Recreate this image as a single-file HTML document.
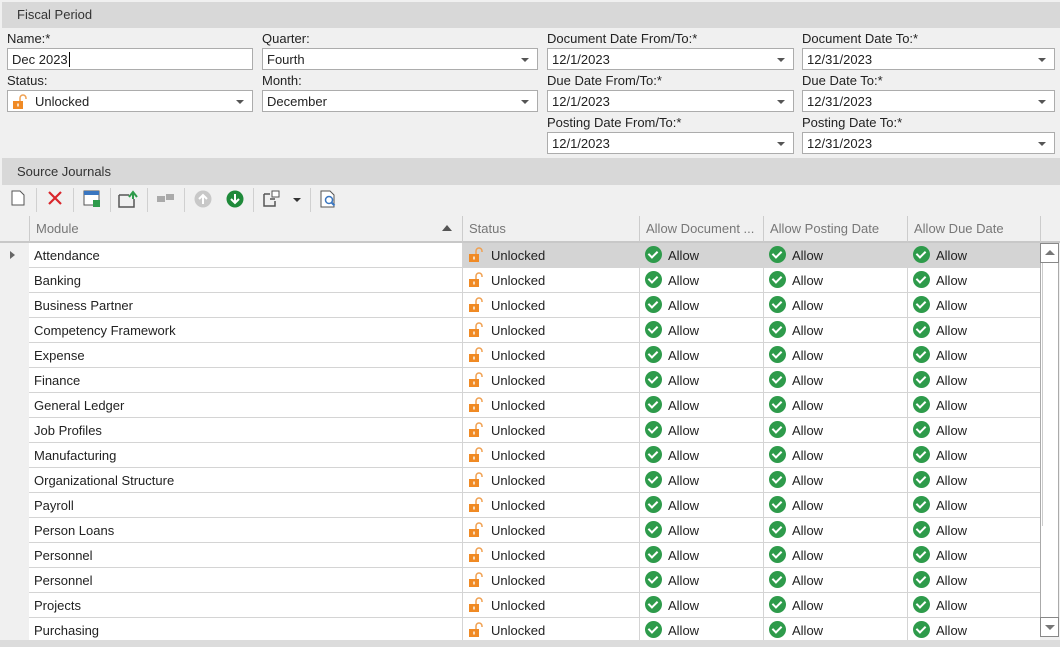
<!DOCTYPE html><html><head><style>
*{box-sizing:border-box;margin:0;padding:0}
body{width:1060px;height:647px;overflow:hidden;background:#f0f0f0;font-family:"Liberation Sans",sans-serif;font-size:13px;color:#222;position:relative}
.band{position:absolute;left:2px;right:0;background:#d8d8d8;color:#333;padding-left:15px;line-height:25px}
.lbl{position:absolute;font-size:13px;color:#222}
.inp{position:absolute;height:22px;background:#fff;border:1px solid #acacac;padding-left:4px;line-height:21px}
.dd::after{content:"";position:absolute;right:8px;top:9px;border:4px solid transparent;border-top:4px solid #555;border-bottom:0}
.hdr{position:absolute;top:216px;height:27px;border-bottom:2px solid #c8c8c8;color:#777;line-height:25px;padding-left:6px;border-left:1px solid #ccc;background:#f0f0f0}
.row{position:absolute;left:29px;width:1011px;height:25px;background:#fff;border-bottom:1px solid #d4d4d4}
.c{position:absolute;top:0;height:24px;line-height:25px;border-left:1px solid #d4d4d4;padding-left:5px}
.lock{display:inline-block;vertical-align:middle;margin-right:7px;position:relative;top:-2px}
.chk{display:inline-block;width:17px;height:17px;border-radius:50%;background:#2e9b4b;vertical-align:middle;margin-right:6px;position:relative;top:-2px}
.chk::after{content:"";position:absolute;left:5px;top:3px;width:4px;height:7px;border:solid #fff;border-width:0 2px 2px 0;transform:rotate(45deg)}
.tb{position:absolute;top:190px}
.sep{position:absolute;top:188px;width:1px;height:24px;background:#d0d0d0}
</style></head><body>
<div class="band" style="top:2px;height:26px">Fiscal Period</div>
<div class="lbl" style="left:7px;top:31px">Name:*</div>
<div class="lbl" style="left:262px;top:31px">Quarter:</div>
<div class="lbl" style="left:547px;top:31px">Document Date From/To:*</div>
<div class="lbl" style="left:802px;top:31px">Document Date To:*</div>
<div class="inp" style="left:7px;top:48px;width:246px">Dec 2023<span style="border-left:1px solid #000;margin-left:1px"></span></div>
<div class="inp dd" style="left:262px;top:48px;width:276px">Fourth</div>
<div class="inp dd" style="left:547px;top:48px;width:247px">12/1/2023</div>
<div class="inp dd" style="left:802px;top:48px;width:253px">12/31/2023</div>
<div class="lbl" style="left:7px;top:73px">Status:</div>
<div class="lbl" style="left:262px;top:73px">Month:</div>
<div class="lbl" style="left:547px;top:73px">Due Date From/To:*</div>
<div class="lbl" style="left:802px;top:73px">Due Date To:*</div>
<div class="inp dd" style="left:7px;top:90px;width:246px"><svg class="lock" style="top:-1px" width="16" height="16" viewBox="0 0 16 16"><path d="M8 7V4a3 3 0 0 1 6 0v1" fill="none" stroke="#f0a050" stroke-width="1.5"/><rect x="1" y="7" width="10" height="8" fill="#f08a24"/><rect x="5.3" y="9.5" width="1.4" height="3" fill="#fff"/></svg>Unlocked</div>
<div class="inp dd" style="left:262px;top:90px;width:276px">December</div>
<div class="inp dd" style="left:547px;top:90px;width:247px">12/1/2023</div>
<div class="inp dd" style="left:802px;top:90px;width:253px">12/31/2023</div>
<div class="lbl" style="left:547px;top:115px">Posting Date From/To:*</div>
<div class="lbl" style="left:802px;top:115px">Posting Date To:*</div>
<div class="inp dd" style="left:547px;top:132px;width:247px">12/1/2023</div>
<div class="inp dd" style="left:802px;top:132px;width:253px">12/31/2023</div>
<div class="band" style="top:158px;height:27px;line-height:27px">Source Journals</div>

<svg class="tb" style="left:11px" width="14" height="16"><path d="M1 1h8l4 4v10H1z" fill="#fff" stroke="#555"/></svg>
<div class="sep" style="left:36px"></div>
<svg class="tb" style="left:47px" width="16" height="16"><path d="M2 2l12 12M14 2L2 14" stroke="#d9262c" stroke-width="2.2"/></svg>
<div class="sep" style="left:73px"></div>
<svg class="tb" style="left:83px" width="18" height="18"><rect x="1" y="1" width="15" height="14" fill="#fff" stroke="#555"/><rect x="1" y="1" width="15" height="4" fill="#3a76c0"/><rect x="10" y="10" width="7" height="7" fill="#2e9b4b"/></svg>
<div class="sep" style="left:110px"></div>
<svg class="tb" style="left:118px" width="20" height="18"><path d="M1 5h10M1 5v12h15V9" fill="none" stroke="#555" stroke-width="1.5"/><path d="M11 7l4-5 4 5M15 2v7" fill="none" stroke="#2e9b4b" stroke-width="2"/></svg>
<div class="sep" style="left:147px"></div>
<svg class="tb" style="left:155px" width="22" height="16"><rect x="2" y="6" width="8" height="6" fill="#aaa"/><rect x="11" y="4" width="8" height="6" fill="#aaa"/></svg>
<div class="sep" style="left:184px"></div>
<svg class="tb" style="left:194px" width="18" height="18"><circle cx="9" cy="9" r="8.5" fill="#c8c8c8"/><path d="M9 14V5M5 9l4-4 4 4" stroke="#fff" stroke-width="2" fill="none"/></svg>
<svg class="tb" style="left:226px" width="18" height="18"><circle cx="9" cy="9" r="8.5" fill="#1f8a3a"/><path d="M9 4v9M5 9l4 4 4-4" stroke="#fff" stroke-width="2" fill="none"/></svg>
<div class="sep" style="left:253px"></div>
<svg class="tb" style="left:263px" width="40" height="18"><path d="M1 4h6M1 4v12h11v-5M7 9h5" fill="none" stroke="#555" stroke-width="1.5"/><rect x="9" y="1" width="7" height="6" fill="#fff" stroke="#555"/><path d="M30 8h8l-4 4z" fill="#333"/></svg>
<div class="sep" style="left:310px"></div>
<svg class="tb" style="left:320px" width="18" height="18"><path d="M1 1h9l4 4v12H1z" fill="#fff" stroke="#555"/><circle cx="9" cy="10" r="3.5" fill="none" stroke="#3a76c0" stroke-width="1.5"/><path d="M11.5 12.5l3 3" stroke="#3a76c0" stroke-width="2"/></svg>

<div class="hdr" style="left:0;width:29px;border-left:0"></div>
<div class="hdr" style="left:29px;width:433px">Module<span style="position:absolute;right:10px;top:9px;border:5px solid transparent;border-bottom:6px solid #555;border-top:0"></span></div>
<div class="hdr" style="left:462px;width:177px">Status</div>
<div class="hdr" style="left:639px;width:124px">Allow Document ...</div>
<div class="hdr" style="left:763px;width:144px">Allow Posting Date</div>
<div class="hdr" style="left:907px;width:133px">Allow Due Date</div>
<div class="hdr" style="left:1040px;width:20px"></div>
<div style="position:absolute;left:10px;top:251px;border:4px solid transparent;border-left:5px solid #666;border-right:0"></div>
<div id="rows"></div>
<div style="position:absolute;left:1040px;top:243px;width:19px;height:394px;border:1px solid #aaa;background:#fff"></div>
<div style="position:absolute;left:1040px;top:243px;width:19px;height:20px;border:1px solid #888;background:#fff"><span style="position:absolute;left:4px;top:6px;border:5px solid transparent;border-bottom:5px solid #777;border-top:0"></span></div>
<div style="position:absolute;left:1040px;top:617px;width:19px;height:20px;border:1px solid #888;background:#fff"><span style="position:absolute;left:4px;top:7px;border:5px solid transparent;border-top:5px solid #777;border-bottom:0"></span></div>
<div style="position:absolute;left:1042px;top:263px;width:16px;height:263px;background:#fff;border-left:1px solid #ccc"></div>
<div style="position:absolute;left:0;top:640px;width:1060px;height:7px;background:#dcdcdc"></div>
<script>
var m=["Attendance","Banking","Business Partner","Competency Framework","Expense","Finance","General Ledger","Job Profiles","Manufacturing","Organizational Structure","Payroll","Person Loans","Personnel","Personnel","Projects","Purchasing"];
var lock='<svg class="lock" width="16" height="16" viewBox="0 0 16 16"><path d="M8 7V4a3 3 0 0 1 6 0v1" fill="none" stroke="#f0a050" stroke-width="1.5"/><rect x="1" y="7" width="10" height="8" fill="#f08a24"/><rect x="5.3" y="9.5" width="1.4" height="3" fill="#fff"/></svg>';
var a='<span class="chk"></span>Allow',h='';
m.forEach(function(n,i){var s=i==0?'background:#d4d4d4':'';h+='<div class="row" style="top:'+(243+i*25)+'px">'+
'<div class="c" style="left:0;width:433px;border-left:0">'+n+'</div>'+
'<div class="c" style="left:433px;width:177px;'+s+'">'+lock+'Unlocked</div>'+
'<div class="c" style="left:610px;width:124px;'+s+'">'+a+'</div>'+
'<div class="c" style="left:734px;width:144px;'+s+'">'+a+'</div>'+
'<div class="c" style="left:878px;width:133px;'+s+'">'+a+'</div></div>';});
document.getElementById('rows').innerHTML=h;
</script>
</body></html>
